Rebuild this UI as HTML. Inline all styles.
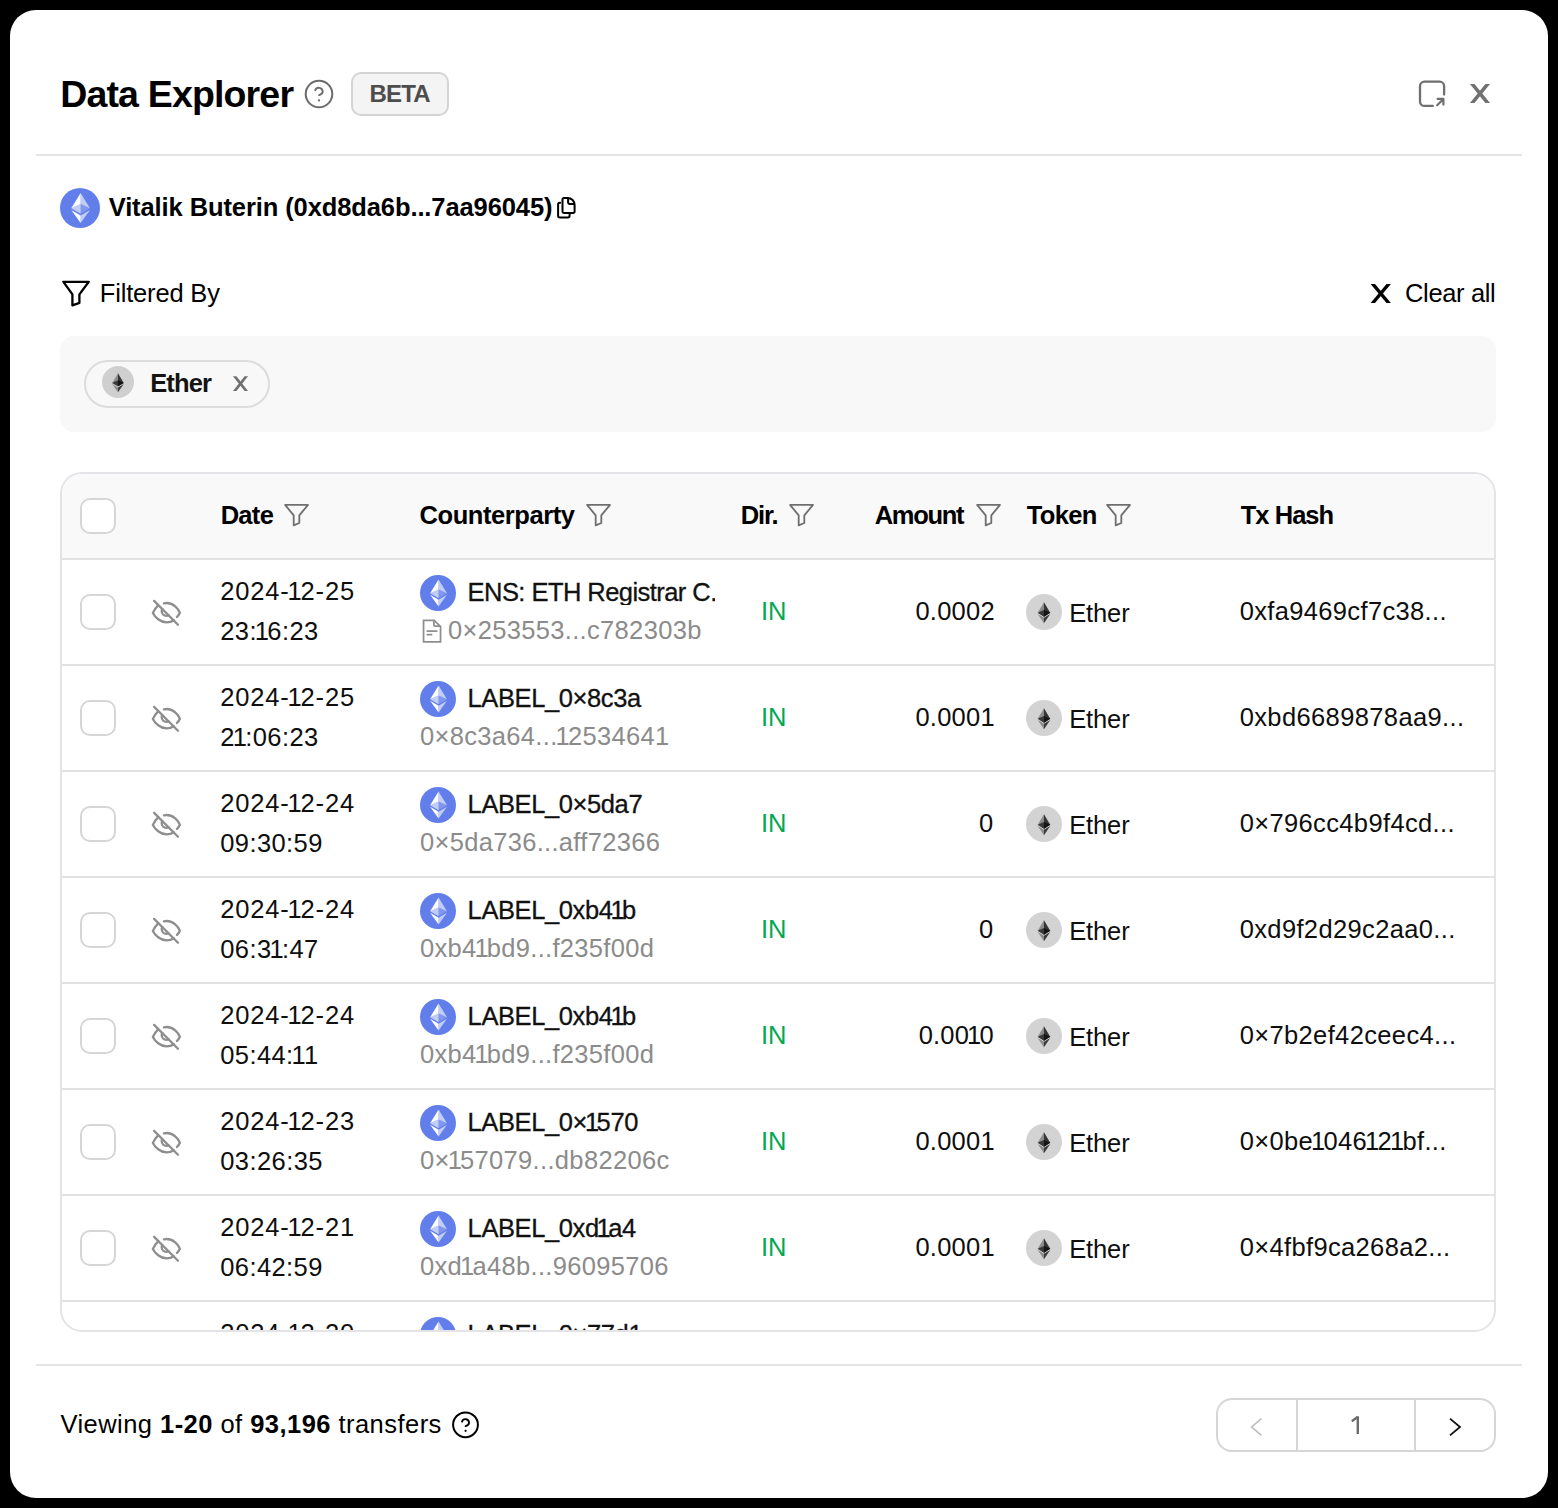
<!DOCTYPE html>
<html><head><meta charset="utf-8">
<style>
html,body{margin:0;padding:0;background:#000;width:1558px;height:1508px;overflow:hidden}
body{position:relative;font-family:"Liberation Sans",sans-serif}
.modal{position:absolute;left:10px;top:10px;width:1538px;height:1488px;background:#fff;border-radius:26px;overflow:hidden}
.abs{position:absolute}
.t{position:absolute;white-space:nowrap;font-family:"Liberation Sans",sans-serif}
.t b{font-weight:bold}
.hr{position:absolute;height:2px;background:#e4e4e8}
.cb{position:absolute;width:32px;height:32px;border:2px solid #d6d6d6;border-radius:10px;background:#fff}
.ethc{position:absolute;width:36px;height:36px}
.tokc{position:absolute;width:36px;height:36px;border-radius:50%;background:#d3d3d3}
</style></head><body>
<div class="modal"></div>
<!-- header -->
<svg class="abs" style="left:303px;top:78px" width="32" height="32" viewBox="0 0 32 32">
  <circle cx="16" cy="16" r="13.3" fill="none" stroke="#6b6b6b" stroke-width="2"/>
  <path d="M12.2 12.2a3.9 3.9 0 0 1 7.5 1.3c0 2.5-3.6 3.6-3.6 3.6" fill="none" stroke="#6b6b6b" stroke-width="1.9" stroke-linecap="round"/>
  <circle cx="16" cy="22.4" r="1.15" fill="#6b6b6b"/>
</svg>
<div class="abs" style="left:351px;top:72px;width:94px;height:40px;border:2px solid #d4d4d4;border-radius:10px;background:#f4f4f4"></div>
<svg class="abs" style="left:1410px;top:72px" width="44" height="44" viewBox="0 0 44 44">
  <path d="M22.8 33.9H14.5a4.5 4.5 0 0 1-4.5-4.5V14.2A4.5 4.5 0 0 1 14.5 9.7H29.6a4.5 4.5 0 0 1 4.5 4.5V22.6" fill="none" stroke="#6f6f6f" stroke-width="2.3" stroke-linecap="round"/>
  <path d="M27.2 33.2L33.4 27M27.6 26.8H33.4V32.6" fill="none" stroke="#6f6f6f" stroke-width="2.2" stroke-linecap="round" stroke-linejoin="round"/>
</svg>
<svg class="abs" style="left:1467px;top:82px" width="25" height="24" viewBox="0 0 25 24"><polygon points="2.90,2.00 7.50,2.00 23.00,21.00 18.40,21.00" fill="#717171"/><polygon points="18.40,2.00 23.00,2.00 7.50,21.00 2.90,21.00" fill="#717171"/></svg>
<div class="hr" style="left:36px;top:154px;width:1486px"></div>
<!-- vitalik -->
<svg class="abs" style="left:60px;top:188px" width="40" height="40" viewBox="0 0 32 32">
  <circle cx="16" cy="16" r="16" fill="#627EEA"/>
  <g fill="#FFF"><path fill-opacity=".602" d="M16.498 4v8.87l7.497 3.35z"/><path d="M16.498 4L9 16.22l7.498-3.35z"/><path fill-opacity=".602" d="M16.498 21.968v6.027L24 17.616z"/><path d="M16.498 27.995v-6.028L9 17.616z"/><path fill-opacity=".2" d="M16.498 20.573l7.497-4.353-7.497-3.348z"/><path fill-opacity=".602" d="M9 16.22l7.498 4.353v-7.701z"/></g>
</svg>
<svg class="abs" style="left:552px;top:192px" width="30" height="30" viewBox="0 0 30 30">
  <path d="M8.9 10.8H7.7A1.6 1.6 0 0 0 6.1 12.4V23.8A1.6 1.6 0 0 0 7.7 25.4H16A1.6 1.6 0 0 0 17.6 23.8V21.2" fill="none" stroke="#000" stroke-width="2" stroke-linejoin="round"/>
  <path d="M10.5 7.4A1.4 1.4 0 0 1 11.9 6H15.6C19.6 6 22.6 9.2 22.6 13V19.5A1.4 1.4 0 0 1 21.2 20.9H11.9A1.4 1.4 0 0 1 10.5 19.5Z" fill="none" stroke="#000" stroke-width="2" stroke-linejoin="round"/>
  <path d="M16.1 6.2V10.3A1.6 1.6 0 0 0 17.7 11.9H22.4" fill="none" stroke="#000" stroke-width="2"/>
</svg>
<!-- filter row -->
<svg class="abs" style="left:56px;top:274px" width="40" height="40" viewBox="0 0 40 40">
  <path d="M7.4 7.8H32.8L23.4 20.4V28.8L16.4 31.4V20.4Z" fill="none" stroke="#000" stroke-width="2.3" stroke-linejoin="round"/>
</svg>
<svg class="abs" style="left:1368px;top:281px" width="25" height="24" viewBox="0 0 25 24"><polygon points="2.60,2.90 7.00,2.90 22.90,22.00 18.50,22.00" fill="#000"/><polygon points="18.50,2.90 22.90,2.90 7.00,22.00 2.60,22.00" fill="#000"/></svg>
<div class="abs" style="left:60px;top:336px;width:1436px;height:96px;background:#f8f8f8;border-radius:14px"></div>
<div class="abs" style="left:84px;top:360px;width:182px;height:44px;border:2px solid #dcdcdc;border-radius:24px;background:#f8f8f8"></div>
<svg class="abs" style="left:102px;top:366px" width="32" height="32" viewBox="0 0 32 32">
  <circle cx="16" cy="16" r="16" fill="#cfcfcf"/>
  <g transform="translate(10.2 7.3) scale(0.0452)">
  <polygon fill="#343434" points="127.9611 0 125.1661 9.5 125.1661 285.168 127.9611 287.958 255.9231 212.32"/>
  <polygon fill="#8C8C8C" points="127.962 0 0 212.32 127.962 287.959 127.962 154.158"/>
  <polygon fill="#3C3C3B" points="127.9611 312.1866 126.3861 314.1066 126.3861 412.3056 127.9611 416.9066 255.9991 236.5866"/>
  <polygon fill="#8C8C8C" points="127.962 416.9052 127.962 312.1852 0 236.5852"/>
  <polygon fill="#141414" points="127.9611 287.9577 255.9211 212.3207 127.9611 154.1587"/>
  <polygon fill="#393939" points="0.0009 212.3208 127.9609 287.9578 127.9609 154.1588"/>
  </g>
</svg>
<svg class="abs" style="left:231px;top:374px" width="20" height="19" viewBox="0 0 20 19"><polygon points="2.00,2.20 5.40,2.20 17.00,16.90 13.60,16.90" fill="#6f6f6f"/><polygon points="13.60,2.20 17.00,2.20 5.40,16.90 2.00,16.90" fill="#6f6f6f"/></svg>
<!-- table -->
<div class="abs" style="left:60px;top:472px;width:1432px;height:856px;border:2px solid #e4e4e8;border-radius:22px;overflow:hidden;background:#fff">
  <div class="abs" style="left:0;top:0;width:1432px;height:84px;background:#f9f9f9"></div>
  <div class="abs" style="left:0;top:84px;width:1432px;height:2px;background:#e2e2e2"></div>
  <div class="abs" style="left:0;top:190px;width:1432px;height:2px;background:#e2e2e2"></div>
<div class="abs" style="left:0;top:296px;width:1432px;height:2px;background:#e2e2e2"></div>
<div class="abs" style="left:0;top:402px;width:1432px;height:2px;background:#e2e2e2"></div>
<div class="abs" style="left:0;top:508px;width:1432px;height:2px;background:#e2e2e2"></div>
<div class="abs" style="left:0;top:614px;width:1432px;height:2px;background:#e2e2e2"></div>
<div class="abs" style="left:0;top:720px;width:1432px;height:2px;background:#e2e2e2"></div>
<div class="abs" style="left:0;top:826px;width:1432px;height:2px;background:#e2e2e2"></div>
</div>
<div class="cb" style="left:80px;top:498px"></div>
<svg class="abs" style="left:282px;top:502px" width="30" height="28" viewBox="0 0 30 28"><path d="M3.1 2.9H26L17.3 13.4V21L11.7 23.4V13.4Z" fill="none" stroke="#6f6f6f" stroke-width="1.8" stroke-linejoin="round"/></svg>
<svg class="abs" style="left:584px;top:502px" width="30" height="28" viewBox="0 0 30 28"><path d="M3.1 2.9H26L17.3 13.4V21L11.7 23.4V13.4Z" fill="none" stroke="#6f6f6f" stroke-width="1.8" stroke-linejoin="round"/></svg>
<svg class="abs" style="left:787px;top:502px" width="30" height="28" viewBox="0 0 30 28"><path d="M3.1 2.9H26L17.3 13.4V21L11.7 23.4V13.4Z" fill="none" stroke="#6f6f6f" stroke-width="1.8" stroke-linejoin="round"/></svg>
<svg class="abs" style="left:974px;top:502px" width="30" height="28" viewBox="0 0 30 28"><path d="M3.1 2.9H26L17.3 13.4V21L11.7 23.4V13.4Z" fill="none" stroke="#6f6f6f" stroke-width="1.8" stroke-linejoin="round"/></svg>
<svg class="abs" style="left:1104px;top:502px" width="30" height="28" viewBox="0 0 30 28"><path d="M3.1 2.9H26L17.3 13.4V21L11.7 23.4V13.4Z" fill="none" stroke="#6f6f6f" stroke-width="1.8" stroke-linejoin="round"/></svg>
<div class="abs" style="left:0;top:0;width:1558px;height:1330px;overflow:hidden"><div class="cb" style="left:80px;top:594px"></div>
<svg class="abs" style="left:148px;top:595px" width="36" height="36" viewBox="0 0 36 36"><g fill="none" stroke="#8e8e8e" stroke-width="2.3" stroke-linecap="round"><path d="M6.1 5.9L30 29.8"/><path d="M10.2 10.4C7.8 12.6 6 15.4 4.9 17.9C7 22.2 12.2 27.4 18.8 27.4C21.6 27.4 23.8 26.6 25.8 25.2"/><path d="M15.9 8.3C16.8 8.1 17.8 8 18.8 8C25.4 8.1 30.2 13.4 31.9 17.8C31.2 19.4 30.2 20.8 28.9 22"/><path d="M14.3 13.9C13.9 14.6 13.7 15.4 13.7 16.2C13.7 18.8 15.8 20.8 18.3 20.8C19.1 20.8 19.9 20.6 20.5 20.2"/></g></svg>
<svg class="abs" style="left:1026px;top:594px" width="36" height="36" viewBox="0 0 36 36"><circle cx="18" cy="18" r="18" fill="#d3d3d3"/><g transform="translate(11.7 8.2) scale(0.049 0.0502)"><polygon fill="#343434" points="127.9611 0 125.1661 9.5 125.1661 285.168 127.9611 287.958 255.9231 212.32"/><polygon fill="#8C8C8C" points="127.962 0 0 212.32 127.962 287.959 127.962 154.158"/><polygon fill="#3C3C3B" points="127.9611 312.1866 126.3861 314.1066 126.3861 412.3056 127.9611 416.9066 255.9991 236.5866"/><polygon fill="#8C8C8C" points="127.962 416.9052 127.962 312.1852 0 236.5852"/><polygon fill="#141414" points="127.9611 287.9577 255.9211 212.3207 127.9611 154.1587"/><polygon fill="#393939" points="0.0009 212.3208 127.9609 287.9578 127.9609 154.1588"/></g></svg>
<div class="cb" style="left:80px;top:700px"></div>
<svg class="abs" style="left:148px;top:701px" width="36" height="36" viewBox="0 0 36 36"><g fill="none" stroke="#8e8e8e" stroke-width="2.3" stroke-linecap="round"><path d="M6.1 5.9L30 29.8"/><path d="M10.2 10.4C7.8 12.6 6 15.4 4.9 17.9C7 22.2 12.2 27.4 18.8 27.4C21.6 27.4 23.8 26.6 25.8 25.2"/><path d="M15.9 8.3C16.8 8.1 17.8 8 18.8 8C25.4 8.1 30.2 13.4 31.9 17.8C31.2 19.4 30.2 20.8 28.9 22"/><path d="M14.3 13.9C13.9 14.6 13.7 15.4 13.7 16.2C13.7 18.8 15.8 20.8 18.3 20.8C19.1 20.8 19.9 20.6 20.5 20.2"/></g></svg>
<svg class="abs" style="left:1026px;top:700px" width="36" height="36" viewBox="0 0 36 36"><circle cx="18" cy="18" r="18" fill="#d3d3d3"/><g transform="translate(11.7 8.2) scale(0.049 0.0502)"><polygon fill="#343434" points="127.9611 0 125.1661 9.5 125.1661 285.168 127.9611 287.958 255.9231 212.32"/><polygon fill="#8C8C8C" points="127.962 0 0 212.32 127.962 287.959 127.962 154.158"/><polygon fill="#3C3C3B" points="127.9611 312.1866 126.3861 314.1066 126.3861 412.3056 127.9611 416.9066 255.9991 236.5866"/><polygon fill="#8C8C8C" points="127.962 416.9052 127.962 312.1852 0 236.5852"/><polygon fill="#141414" points="127.9611 287.9577 255.9211 212.3207 127.9611 154.1587"/><polygon fill="#393939" points="0.0009 212.3208 127.9609 287.9578 127.9609 154.1588"/></g></svg>
<div class="cb" style="left:80px;top:806px"></div>
<svg class="abs" style="left:148px;top:807px" width="36" height="36" viewBox="0 0 36 36"><g fill="none" stroke="#8e8e8e" stroke-width="2.3" stroke-linecap="round"><path d="M6.1 5.9L30 29.8"/><path d="M10.2 10.4C7.8 12.6 6 15.4 4.9 17.9C7 22.2 12.2 27.4 18.8 27.4C21.6 27.4 23.8 26.6 25.8 25.2"/><path d="M15.9 8.3C16.8 8.1 17.8 8 18.8 8C25.4 8.1 30.2 13.4 31.9 17.8C31.2 19.4 30.2 20.8 28.9 22"/><path d="M14.3 13.9C13.9 14.6 13.7 15.4 13.7 16.2C13.7 18.8 15.8 20.8 18.3 20.8C19.1 20.8 19.9 20.6 20.5 20.2"/></g></svg>
<svg class="abs" style="left:1026px;top:806px" width="36" height="36" viewBox="0 0 36 36"><circle cx="18" cy="18" r="18" fill="#d3d3d3"/><g transform="translate(11.7 8.2) scale(0.049 0.0502)"><polygon fill="#343434" points="127.9611 0 125.1661 9.5 125.1661 285.168 127.9611 287.958 255.9231 212.32"/><polygon fill="#8C8C8C" points="127.962 0 0 212.32 127.962 287.959 127.962 154.158"/><polygon fill="#3C3C3B" points="127.9611 312.1866 126.3861 314.1066 126.3861 412.3056 127.9611 416.9066 255.9991 236.5866"/><polygon fill="#8C8C8C" points="127.962 416.9052 127.962 312.1852 0 236.5852"/><polygon fill="#141414" points="127.9611 287.9577 255.9211 212.3207 127.9611 154.1587"/><polygon fill="#393939" points="0.0009 212.3208 127.9609 287.9578 127.9609 154.1588"/></g></svg>
<div class="cb" style="left:80px;top:912px"></div>
<svg class="abs" style="left:148px;top:913px" width="36" height="36" viewBox="0 0 36 36"><g fill="none" stroke="#8e8e8e" stroke-width="2.3" stroke-linecap="round"><path d="M6.1 5.9L30 29.8"/><path d="M10.2 10.4C7.8 12.6 6 15.4 4.9 17.9C7 22.2 12.2 27.4 18.8 27.4C21.6 27.4 23.8 26.6 25.8 25.2"/><path d="M15.9 8.3C16.8 8.1 17.8 8 18.8 8C25.4 8.1 30.2 13.4 31.9 17.8C31.2 19.4 30.2 20.8 28.9 22"/><path d="M14.3 13.9C13.9 14.6 13.7 15.4 13.7 16.2C13.7 18.8 15.8 20.8 18.3 20.8C19.1 20.8 19.9 20.6 20.5 20.2"/></g></svg>
<svg class="abs" style="left:1026px;top:912px" width="36" height="36" viewBox="0 0 36 36"><circle cx="18" cy="18" r="18" fill="#d3d3d3"/><g transform="translate(11.7 8.2) scale(0.049 0.0502)"><polygon fill="#343434" points="127.9611 0 125.1661 9.5 125.1661 285.168 127.9611 287.958 255.9231 212.32"/><polygon fill="#8C8C8C" points="127.962 0 0 212.32 127.962 287.959 127.962 154.158"/><polygon fill="#3C3C3B" points="127.9611 312.1866 126.3861 314.1066 126.3861 412.3056 127.9611 416.9066 255.9991 236.5866"/><polygon fill="#8C8C8C" points="127.962 416.9052 127.962 312.1852 0 236.5852"/><polygon fill="#141414" points="127.9611 287.9577 255.9211 212.3207 127.9611 154.1587"/><polygon fill="#393939" points="0.0009 212.3208 127.9609 287.9578 127.9609 154.1588"/></g></svg>
<div class="cb" style="left:80px;top:1018px"></div>
<svg class="abs" style="left:148px;top:1019px" width="36" height="36" viewBox="0 0 36 36"><g fill="none" stroke="#8e8e8e" stroke-width="2.3" stroke-linecap="round"><path d="M6.1 5.9L30 29.8"/><path d="M10.2 10.4C7.8 12.6 6 15.4 4.9 17.9C7 22.2 12.2 27.4 18.8 27.4C21.6 27.4 23.8 26.6 25.8 25.2"/><path d="M15.9 8.3C16.8 8.1 17.8 8 18.8 8C25.4 8.1 30.2 13.4 31.9 17.8C31.2 19.4 30.2 20.8 28.9 22"/><path d="M14.3 13.9C13.9 14.6 13.7 15.4 13.7 16.2C13.7 18.8 15.8 20.8 18.3 20.8C19.1 20.8 19.9 20.6 20.5 20.2"/></g></svg>
<svg class="abs" style="left:1026px;top:1018px" width="36" height="36" viewBox="0 0 36 36"><circle cx="18" cy="18" r="18" fill="#d3d3d3"/><g transform="translate(11.7 8.2) scale(0.049 0.0502)"><polygon fill="#343434" points="127.9611 0 125.1661 9.5 125.1661 285.168 127.9611 287.958 255.9231 212.32"/><polygon fill="#8C8C8C" points="127.962 0 0 212.32 127.962 287.959 127.962 154.158"/><polygon fill="#3C3C3B" points="127.9611 312.1866 126.3861 314.1066 126.3861 412.3056 127.9611 416.9066 255.9991 236.5866"/><polygon fill="#8C8C8C" points="127.962 416.9052 127.962 312.1852 0 236.5852"/><polygon fill="#141414" points="127.9611 287.9577 255.9211 212.3207 127.9611 154.1587"/><polygon fill="#393939" points="0.0009 212.3208 127.9609 287.9578 127.9609 154.1588"/></g></svg>
<div class="cb" style="left:80px;top:1124px"></div>
<svg class="abs" style="left:148px;top:1125px" width="36" height="36" viewBox="0 0 36 36"><g fill="none" stroke="#8e8e8e" stroke-width="2.3" stroke-linecap="round"><path d="M6.1 5.9L30 29.8"/><path d="M10.2 10.4C7.8 12.6 6 15.4 4.9 17.9C7 22.2 12.2 27.4 18.8 27.4C21.6 27.4 23.8 26.6 25.8 25.2"/><path d="M15.9 8.3C16.8 8.1 17.8 8 18.8 8C25.4 8.1 30.2 13.4 31.9 17.8C31.2 19.4 30.2 20.8 28.9 22"/><path d="M14.3 13.9C13.9 14.6 13.7 15.4 13.7 16.2C13.7 18.8 15.8 20.8 18.3 20.8C19.1 20.8 19.9 20.6 20.5 20.2"/></g></svg>
<svg class="abs" style="left:1026px;top:1124px" width="36" height="36" viewBox="0 0 36 36"><circle cx="18" cy="18" r="18" fill="#d3d3d3"/><g transform="translate(11.7 8.2) scale(0.049 0.0502)"><polygon fill="#343434" points="127.9611 0 125.1661 9.5 125.1661 285.168 127.9611 287.958 255.9231 212.32"/><polygon fill="#8C8C8C" points="127.962 0 0 212.32 127.962 287.959 127.962 154.158"/><polygon fill="#3C3C3B" points="127.9611 312.1866 126.3861 314.1066 126.3861 412.3056 127.9611 416.9066 255.9991 236.5866"/><polygon fill="#8C8C8C" points="127.962 416.9052 127.962 312.1852 0 236.5852"/><polygon fill="#141414" points="127.9611 287.9577 255.9211 212.3207 127.9611 154.1587"/><polygon fill="#393939" points="0.0009 212.3208 127.9609 287.9578 127.9609 154.1588"/></g></svg>
<div class="cb" style="left:80px;top:1230px"></div>
<svg class="abs" style="left:148px;top:1231px" width="36" height="36" viewBox="0 0 36 36"><g fill="none" stroke="#8e8e8e" stroke-width="2.3" stroke-linecap="round"><path d="M6.1 5.9L30 29.8"/><path d="M10.2 10.4C7.8 12.6 6 15.4 4.9 17.9C7 22.2 12.2 27.4 18.8 27.4C21.6 27.4 23.8 26.6 25.8 25.2"/><path d="M15.9 8.3C16.8 8.1 17.8 8 18.8 8C25.4 8.1 30.2 13.4 31.9 17.8C31.2 19.4 30.2 20.8 28.9 22"/><path d="M14.3 13.9C13.9 14.6 13.7 15.4 13.7 16.2C13.7 18.8 15.8 20.8 18.3 20.8C19.1 20.8 19.9 20.6 20.5 20.2"/></g></svg>
<svg class="abs" style="left:1026px;top:1230px" width="36" height="36" viewBox="0 0 36 36"><circle cx="18" cy="18" r="18" fill="#d3d3d3"/><g transform="translate(11.7 8.2) scale(0.049 0.0502)"><polygon fill="#343434" points="127.9611 0 125.1661 9.5 125.1661 285.168 127.9611 287.958 255.9231 212.32"/><polygon fill="#8C8C8C" points="127.962 0 0 212.32 127.962 287.959 127.962 154.158"/><polygon fill="#3C3C3B" points="127.9611 312.1866 126.3861 314.1066 126.3861 412.3056 127.9611 416.9066 255.9991 236.5866"/><polygon fill="#8C8C8C" points="127.962 416.9052 127.962 312.1852 0 236.5852"/><polygon fill="#141414" points="127.9611 287.9577 255.9211 212.3207 127.9611 154.1587"/><polygon fill="#393939" points="0.0009 212.3208 127.9609 287.9578 127.9609 154.1588"/></g></svg>
<div class="cb" style="left:80px;top:1336px"></div>
<svg class="abs" style="left:148px;top:1337px" width="36" height="36" viewBox="0 0 36 36"><g fill="none" stroke="#8e8e8e" stroke-width="2.3" stroke-linecap="round"><path d="M6.1 5.9L30 29.8"/><path d="M10.2 10.4C7.8 12.6 6 15.4 4.9 17.9C7 22.2 12.2 27.4 18.8 27.4C21.6 27.4 23.8 26.6 25.8 25.2"/><path d="M15.9 8.3C16.8 8.1 17.8 8 18.8 8C25.4 8.1 30.2 13.4 31.9 17.8C31.2 19.4 30.2 20.8 28.9 22"/><path d="M14.3 13.9C13.9 14.6 13.7 15.4 13.7 16.2C13.7 18.8 15.8 20.8 18.3 20.8C19.1 20.8 19.9 20.6 20.5 20.2"/></g></svg>
<svg class="abs" style="left:1026px;top:1336px" width="36" height="36" viewBox="0 0 36 36"><circle cx="18" cy="18" r="18" fill="#d3d3d3"/><g transform="translate(11.7 8.2) scale(0.049 0.0502)"><polygon fill="#343434" points="127.9611 0 125.1661 9.5 125.1661 285.168 127.9611 287.958 255.9231 212.32"/><polygon fill="#8C8C8C" points="127.962 0 0 212.32 127.962 287.959 127.962 154.158"/><polygon fill="#3C3C3B" points="127.9611 312.1866 126.3861 314.1066 126.3861 412.3056 127.9611 416.9066 255.9991 236.5866"/><polygon fill="#8C8C8C" points="127.962 416.9052 127.962 312.1852 0 236.5852"/><polygon fill="#141414" points="127.9611 287.9577 255.9211 212.3207 127.9611 154.1587"/><polygon fill="#393939" points="0.0009 212.3208 127.9609 287.9578 127.9609 154.1588"/></g></svg>
<svg class="abs" style="left:420px;top:575px" width="36" height="36" viewBox="0 0 32 32"><circle cx="16" cy="16" r="16" fill="#627EEA"/><g fill="#FFF"><path fill-opacity=".602" d="M16.498 4v8.87l7.497 3.35z"/><path d="M16.498 4L9 16.22l7.498-3.35z"/><path fill-opacity=".602" d="M16.498 21.968v6.027L24 17.616z"/><path d="M16.498 27.995v-6.028L9 17.616z"/><path fill-opacity=".2" d="M16.498 20.573l7.497-4.353-7.497-3.348z"/><path fill-opacity=".602" d="M9 16.22l7.498 4.353v-7.701z"/></g></svg>
<svg class="abs" style="left:418px;top:615px" width="28" height="32" viewBox="0 0 28 32"><g fill="none" stroke="#8e8e8e" stroke-width="1.75"><path d="M5.55 5.25H16.1L22.55 11.6V26.75H5.55Z"/><path d="M15.9 5.25V10A1.2 1.2 0 0 0 17.1 11.2H22.55"/><path d="M9.2 16.1H18.8M9.2 19.6H13.6" stroke-linecap="round"/></g></svg>
<svg class="abs" style="left:420px;top:681px" width="36" height="36" viewBox="0 0 32 32"><circle cx="16" cy="16" r="16" fill="#627EEA"/><g fill="#FFF"><path fill-opacity=".602" d="M16.498 4v8.87l7.497 3.35z"/><path d="M16.498 4L9 16.22l7.498-3.35z"/><path fill-opacity=".602" d="M16.498 21.968v6.027L24 17.616z"/><path d="M16.498 27.995v-6.028L9 17.616z"/><path fill-opacity=".2" d="M16.498 20.573l7.497-4.353-7.497-3.348z"/><path fill-opacity=".602" d="M9 16.22l7.498 4.353v-7.701z"/></g></svg>
<svg class="abs" style="left:420px;top:787px" width="36" height="36" viewBox="0 0 32 32"><circle cx="16" cy="16" r="16" fill="#627EEA"/><g fill="#FFF"><path fill-opacity=".602" d="M16.498 4v8.87l7.497 3.35z"/><path d="M16.498 4L9 16.22l7.498-3.35z"/><path fill-opacity=".602" d="M16.498 21.968v6.027L24 17.616z"/><path d="M16.498 27.995v-6.028L9 17.616z"/><path fill-opacity=".2" d="M16.498 20.573l7.497-4.353-7.497-3.348z"/><path fill-opacity=".602" d="M9 16.22l7.498 4.353v-7.701z"/></g></svg>
<svg class="abs" style="left:420px;top:893px" width="36" height="36" viewBox="0 0 32 32"><circle cx="16" cy="16" r="16" fill="#627EEA"/><g fill="#FFF"><path fill-opacity=".602" d="M16.498 4v8.87l7.497 3.35z"/><path d="M16.498 4L9 16.22l7.498-3.35z"/><path fill-opacity=".602" d="M16.498 21.968v6.027L24 17.616z"/><path d="M16.498 27.995v-6.028L9 17.616z"/><path fill-opacity=".2" d="M16.498 20.573l7.497-4.353-7.497-3.348z"/><path fill-opacity=".602" d="M9 16.22l7.498 4.353v-7.701z"/></g></svg>
<svg class="abs" style="left:420px;top:999px" width="36" height="36" viewBox="0 0 32 32"><circle cx="16" cy="16" r="16" fill="#627EEA"/><g fill="#FFF"><path fill-opacity=".602" d="M16.498 4v8.87l7.497 3.35z"/><path d="M16.498 4L9 16.22l7.498-3.35z"/><path fill-opacity=".602" d="M16.498 21.968v6.027L24 17.616z"/><path d="M16.498 27.995v-6.028L9 17.616z"/><path fill-opacity=".2" d="M16.498 20.573l7.497-4.353-7.497-3.348z"/><path fill-opacity=".602" d="M9 16.22l7.498 4.353v-7.701z"/></g></svg>
<svg class="abs" style="left:420px;top:1105px" width="36" height="36" viewBox="0 0 32 32"><circle cx="16" cy="16" r="16" fill="#627EEA"/><g fill="#FFF"><path fill-opacity=".602" d="M16.498 4v8.87l7.497 3.35z"/><path d="M16.498 4L9 16.22l7.498-3.35z"/><path fill-opacity=".602" d="M16.498 21.968v6.027L24 17.616z"/><path d="M16.498 27.995v-6.028L9 17.616z"/><path fill-opacity=".2" d="M16.498 20.573l7.497-4.353-7.497-3.348z"/><path fill-opacity=".602" d="M9 16.22l7.498 4.353v-7.701z"/></g></svg>
<svg class="abs" style="left:420px;top:1211px" width="36" height="36" viewBox="0 0 32 32"><circle cx="16" cy="16" r="16" fill="#627EEA"/><g fill="#FFF"><path fill-opacity=".602" d="M16.498 4v8.87l7.497 3.35z"/><path d="M16.498 4L9 16.22l7.498-3.35z"/><path fill-opacity=".602" d="M16.498 21.968v6.027L24 17.616z"/><path d="M16.498 27.995v-6.028L9 17.616z"/><path fill-opacity=".2" d="M16.498 20.573l7.497-4.353-7.497-3.348z"/><path fill-opacity=".602" d="M9 16.22l7.498 4.353v-7.701z"/></g></svg>
<svg class="abs" style="left:420px;top:1317px" width="36" height="36" viewBox="0 0 32 32"><circle cx="16" cy="16" r="16" fill="#627EEA"/><g fill="#FFF"><path fill-opacity=".602" d="M16.498 4v8.87l7.497 3.35z"/><path d="M16.498 4L9 16.22l7.498-3.35z"/><path fill-opacity=".602" d="M16.498 21.968v6.027L24 17.616z"/><path d="M16.498 27.995v-6.028L9 17.616z"/><path fill-opacity=".2" d="M16.498 20.573l7.497-4.353-7.497-3.348z"/><path fill-opacity=".602" d="M9 16.22l7.498 4.353v-7.701z"/></g></svg>
<div class="t" style="left:220.20px;top:579.40px;font-size:25.5px;line-height:25.5px;letter-spacing:0.856px;color:#0e0e0e;font-weight:normal">2024<span style="letter-spacing:-1.244px">-</span><span style="letter-spacing:-1.244px">1</span>2-25</div>
<div class="t" style="left:220.20px;top:619.20px;font-size:25.5px;line-height:25.5px;letter-spacing:0.426px;color:#0e0e0e;font-weight:normal">23<span style="letter-spacing:-1.674px">:</span><span style="letter-spacing:-1.674px">1</span>6:23</div>
<div class="t" style="left:467.60px;top:579.90px;font-size:25.5px;line-height:25.5px;letter-spacing:-0.553px;color:#111;font-weight:normal;width:247.40px;overflow:hidden;-webkit-text-stroke:0.3px #111">ENS: ETH Registrar C...</div>
<div class="t" style="left:448.00px;top:617.50px;font-size:25.5px;line-height:25.5px;letter-spacing:0.328px;color:#8b8b8b;font-weight:normal">0×253553...c782303b</div>
<div class="t" style="left:761.10px;top:599.30px;font-size:25.5px;line-height:25.5px;letter-spacing:-0.285px;color:#03a852;font-weight:normal">IN</div>
<div class="t" style="left:915.44px;top:599.30px;font-size:25.5px;line-height:25.5px;letter-spacing:0.229px;color:#0e0e0e;font-weight:normal">0.0002</div>
<div class="t" style="left:1069.20px;top:600.80px;font-size:25.5px;line-height:25.5px;letter-spacing:-0.114px;color:#0e0e0e;font-weight:normal">Ether</div>
<div class="t" style="left:1239.70px;top:598.80px;font-size:25.5px;line-height:25.5px;letter-spacing:0.345px;color:#0e0e0e;font-weight:normal">0xfa9469cf7c38...</div>
<div class="t" style="left:220.20px;top:685.40px;font-size:25.5px;line-height:25.5px;letter-spacing:0.856px;color:#0e0e0e;font-weight:normal">2024<span style="letter-spacing:-1.244px">-</span><span style="letter-spacing:-1.244px">1</span>2-25</div>
<div class="t" style="left:220.20px;top:725.20px;font-size:25.5px;line-height:25.5px;letter-spacing:0.426px;color:#0e0e0e;font-weight:normal"><span style="letter-spacing:-1.674px">2</span><span style="letter-spacing:-1.674px">1</span>:06:23</div>
<div class="t" style="left:467.60px;top:685.90px;font-size:25.5px;line-height:25.5px;letter-spacing:-0.402px;color:#111;font-weight:normal;-webkit-text-stroke:0.3px #111">LABEL_0×8c3a</div>
<div class="t" style="left:420.00px;top:723.50px;font-size:25.5px;line-height:25.5px;letter-spacing:0.327px;color:#8b8b8b;font-weight:normal">0×8c3a64..<span style="letter-spacing:-1.773px">.</span><span style="letter-spacing:-1.773px">1</span>2534641</div>
<div class="t" style="left:761.10px;top:705.30px;font-size:25.5px;line-height:25.5px;letter-spacing:-0.285px;color:#03a852;font-weight:normal">IN</div>
<div class="t" style="left:915.44px;top:705.30px;font-size:25.5px;line-height:25.5px;letter-spacing:0.229px;color:#0e0e0e;font-weight:normal">0.0001</div>
<div class="t" style="left:1069.20px;top:706.80px;font-size:25.5px;line-height:25.5px;letter-spacing:-0.114px;color:#0e0e0e;font-weight:normal">Ether</div>
<div class="t" style="left:1239.70px;top:704.80px;font-size:25.5px;line-height:25.5px;letter-spacing:0.375px;color:#0e0e0e;font-weight:normal">0xbd6689878aa9...</div>
<div class="t" style="left:220.20px;top:791.40px;font-size:25.5px;line-height:25.5px;letter-spacing:0.856px;color:#0e0e0e;font-weight:normal">2024<span style="letter-spacing:-1.244px">-</span><span style="letter-spacing:-1.244px">1</span>2-24</div>
<div class="t" style="left:220.20px;top:831.20px;font-size:25.5px;line-height:25.5px;letter-spacing:0.422px;color:#0e0e0e;font-weight:normal">09:30:59</div>
<div class="t" style="left:467.60px;top:791.90px;font-size:25.5px;line-height:25.5px;letter-spacing:-0.400px;color:#111;font-weight:normal;-webkit-text-stroke:0.3px #111">LABEL_0×5da7</div>
<div class="t" style="left:420.00px;top:829.50px;font-size:25.5px;line-height:25.5px;letter-spacing:0.311px;color:#8b8b8b;font-weight:normal">0×5da736...aff72366</div>
<div class="t" style="left:761.10px;top:811.30px;font-size:25.5px;line-height:25.5px;letter-spacing:-0.285px;color:#03a852;font-weight:normal">IN</div>
<div class="t" style="left:978.88px;top:811.30px;font-size:25.5px;line-height:25.5px;letter-spacing:0.000px;color:#0e0e0e;font-weight:normal">0</div>
<div class="t" style="left:1069.20px;top:812.80px;font-size:25.5px;line-height:25.5px;letter-spacing:-0.114px;color:#0e0e0e;font-weight:normal">Ether</div>
<div class="t" style="left:1239.70px;top:810.80px;font-size:25.5px;line-height:25.5px;letter-spacing:0.359px;color:#0e0e0e;font-weight:normal">0×796cc4b9f4cd...</div>
<div class="t" style="left:220.20px;top:897.40px;font-size:25.5px;line-height:25.5px;letter-spacing:0.856px;color:#0e0e0e;font-weight:normal">2024<span style="letter-spacing:-1.244px">-</span><span style="letter-spacing:-1.244px">1</span>2-24</div>
<div class="t" style="left:220.20px;top:937.20px;font-size:25.5px;line-height:25.5px;letter-spacing:0.422px;color:#0e0e0e;font-weight:normal">06:<span style="letter-spacing:-1.678px">3</span><span style="letter-spacing:-1.678px">1</span>:47</div>
<div class="t" style="left:467.60px;top:897.90px;font-size:25.5px;line-height:25.5px;letter-spacing:-0.398px;color:#111;font-weight:normal;-webkit-text-stroke:0.3px #111">LABEL_0xb<span style="letter-spacing:-2.498px">4</span><span style="letter-spacing:-2.498px">1</span>b</div>
<div class="t" style="left:420.00px;top:935.50px;font-size:25.5px;line-height:25.5px;letter-spacing:0.307px;color:#8b8b8b;font-weight:normal">0xb<span style="letter-spacing:-1.793px">4</span><span style="letter-spacing:-1.793px">1</span>bd9...f235f00d</div>
<div class="t" style="left:761.10px;top:917.30px;font-size:25.5px;line-height:25.5px;letter-spacing:-0.285px;color:#03a852;font-weight:normal">IN</div>
<div class="t" style="left:978.88px;top:917.30px;font-size:25.5px;line-height:25.5px;letter-spacing:0.000px;color:#0e0e0e;font-weight:normal">0</div>
<div class="t" style="left:1069.20px;top:918.80px;font-size:25.5px;line-height:25.5px;letter-spacing:-0.114px;color:#0e0e0e;font-weight:normal">Ether</div>
<div class="t" style="left:1239.70px;top:916.80px;font-size:25.5px;line-height:25.5px;letter-spacing:0.360px;color:#0e0e0e;font-weight:normal">0xd9f2d29c2aa0...</div>
<div class="t" style="left:220.20px;top:1003.40px;font-size:25.5px;line-height:25.5px;letter-spacing:0.856px;color:#0e0e0e;font-weight:normal">2024<span style="letter-spacing:-1.244px">-</span><span style="letter-spacing:-1.244px">1</span>2-24</div>
<div class="t" style="left:220.20px;top:1043.20px;font-size:25.5px;line-height:25.5px;letter-spacing:0.414px;color:#0e0e0e;font-weight:normal">05:44<span style="letter-spacing:-1.686px">:</span><span style="letter-spacing:-1.686px">1</span>1</div>
<div class="t" style="left:467.60px;top:1003.90px;font-size:25.5px;line-height:25.5px;letter-spacing:-0.398px;color:#111;font-weight:normal;-webkit-text-stroke:0.3px #111">LABEL_0xb<span style="letter-spacing:-2.498px">4</span><span style="letter-spacing:-2.498px">1</span>b</div>
<div class="t" style="left:420.00px;top:1041.50px;font-size:25.5px;line-height:25.5px;letter-spacing:0.307px;color:#8b8b8b;font-weight:normal">0xb<span style="letter-spacing:-1.793px">4</span><span style="letter-spacing:-1.793px">1</span>bd9...f235f00d</div>
<div class="t" style="left:761.10px;top:1023.30px;font-size:25.5px;line-height:25.5px;letter-spacing:-0.285px;color:#03a852;font-weight:normal">IN</div>
<div class="t" style="left:918.63px;top:1023.30px;font-size:25.5px;line-height:25.5px;letter-spacing:0.232px;color:#0e0e0e;font-weight:normal">0.0<span style="letter-spacing:-1.868px">0</span><span style="letter-spacing:-1.868px">1</span>0</div>
<div class="t" style="left:1069.20px;top:1024.80px;font-size:25.5px;line-height:25.5px;letter-spacing:-0.114px;color:#0e0e0e;font-weight:normal">Ether</div>
<div class="t" style="left:1239.70px;top:1022.80px;font-size:25.5px;line-height:25.5px;letter-spacing:0.361px;color:#0e0e0e;font-weight:normal">0×7b2ef42ceec4...</div>
<div class="t" style="left:220.20px;top:1109.40px;font-size:25.5px;line-height:25.5px;letter-spacing:0.856px;color:#0e0e0e;font-weight:normal">2024<span style="letter-spacing:-1.244px">-</span><span style="letter-spacing:-1.244px">1</span>2-23</div>
<div class="t" style="left:220.20px;top:1149.20px;font-size:25.5px;line-height:25.5px;letter-spacing:0.426px;color:#0e0e0e;font-weight:normal">03:26:35</div>
<div class="t" style="left:467.60px;top:1109.90px;font-size:25.5px;line-height:25.5px;letter-spacing:-0.403px;color:#111;font-weight:normal;-webkit-text-stroke:0.3px #111">LABEL_0<span style="letter-spacing:-2.503px">×</span><span style="letter-spacing:-2.503px">1</span>570</div>
<div class="t" style="left:420.00px;top:1147.50px;font-size:25.5px;line-height:25.5px;letter-spacing:0.329px;color:#8b8b8b;font-weight:normal">0<span style="letter-spacing:-1.771px">×</span><span style="letter-spacing:-1.771px">1</span>57079...db82206c</div>
<div class="t" style="left:761.10px;top:1129.30px;font-size:25.5px;line-height:25.5px;letter-spacing:-0.285px;color:#03a852;font-weight:normal">IN</div>
<div class="t" style="left:915.44px;top:1129.30px;font-size:25.5px;line-height:25.5px;letter-spacing:0.229px;color:#0e0e0e;font-weight:normal">0.0001</div>
<div class="t" style="left:1069.20px;top:1130.80px;font-size:25.5px;line-height:25.5px;letter-spacing:-0.114px;color:#0e0e0e;font-weight:normal">Ether</div>
<div class="t" style="left:1239.70px;top:1128.80px;font-size:25.5px;line-height:25.5px;letter-spacing:0.366px;color:#0e0e0e;font-weight:normal">0×0b<span style="letter-spacing:-1.734px">e</span><span style="letter-spacing:-1.734px">1</span>04<span style="letter-spacing:-1.734px">6</span><span style="letter-spacing:-1.734px">1</span><span style="letter-spacing:-1.734px">2</span><span style="letter-spacing:-1.734px">1</span>bf...</div>
<div class="t" style="left:220.20px;top:1215.40px;font-size:25.5px;line-height:25.5px;letter-spacing:0.850px;color:#0e0e0e;font-weight:normal">2024<span style="letter-spacing:-1.250px">-</span><span style="letter-spacing:-1.250px">1</span>2-21</div>
<div class="t" style="left:220.20px;top:1255.20px;font-size:25.5px;line-height:25.5px;letter-spacing:0.422px;color:#0e0e0e;font-weight:normal">06:42:59</div>
<div class="t" style="left:467.60px;top:1215.90px;font-size:25.5px;line-height:25.5px;letter-spacing:-0.398px;color:#111;font-weight:normal;-webkit-text-stroke:0.3px #111">LABEL_0x<span style="letter-spacing:-2.498px">d</span><span style="letter-spacing:-2.498px">1</span>a4</div>
<div class="t" style="left:420.00px;top:1253.50px;font-size:25.5px;line-height:25.5px;letter-spacing:0.327px;color:#8b8b8b;font-weight:normal">0x<span style="letter-spacing:-1.773px">d</span><span style="letter-spacing:-1.773px">1</span>a48b...96095706</div>
<div class="t" style="left:761.10px;top:1235.30px;font-size:25.5px;line-height:25.5px;letter-spacing:-0.285px;color:#03a852;font-weight:normal">IN</div>
<div class="t" style="left:915.44px;top:1235.30px;font-size:25.5px;line-height:25.5px;letter-spacing:0.229px;color:#0e0e0e;font-weight:normal">0.0001</div>
<div class="t" style="left:1069.20px;top:1236.80px;font-size:25.5px;line-height:25.5px;letter-spacing:-0.114px;color:#0e0e0e;font-weight:normal">Ether</div>
<div class="t" style="left:1239.70px;top:1234.80px;font-size:25.5px;line-height:25.5px;letter-spacing:0.352px;color:#0e0e0e;font-weight:normal">0×4fbf9ca268a2...</div>
<div class="t" style="left:220.20px;top:1321.40px;font-size:25.5px;line-height:25.5px;letter-spacing:0.856px;color:#0e0e0e;font-weight:normal">2024<span style="letter-spacing:-1.244px">-</span><span style="letter-spacing:-1.244px">1</span>2-20</div>
<div class="t" style="left:220.20px;top:1361.20px;font-size:25.5px;line-height:25.5px;letter-spacing:0.426px;color:#0e0e0e;font-weight:normal">05<span style="letter-spacing:-1.674px">:</span><span style="letter-spacing:-1.674px">1</span>2:44</div>
<div class="t" style="left:467.60px;top:1321.90px;font-size:25.5px;line-height:25.5px;letter-spacing:-0.400px;color:#111;font-weight:normal;-webkit-text-stroke:0.3px #111">LABEL_0×77d1</div>
<div class="t" style="left:420.00px;top:1359.50px;font-size:25.5px;line-height:25.5px;letter-spacing:0.327px;color:#8b8b8b;font-weight:normal">0×77<span style="letter-spacing:-1.773px">d</span><span style="letter-spacing:-1.773px">1</span>a2...8<span style="letter-spacing:-1.773px">a</span><span style="letter-spacing:-1.773px">1</span>b2c3d</div>
<div class="t" style="left:761.10px;top:1341.30px;font-size:25.5px;line-height:25.5px;letter-spacing:-0.285px;color:#03a852;font-weight:normal">IN</div>
<div class="t" style="left:915.44px;top:1341.30px;font-size:25.5px;line-height:25.5px;letter-spacing:0.229px;color:#0e0e0e;font-weight:normal">0.0001</div>
<div class="t" style="left:1069.20px;top:1342.80px;font-size:25.5px;line-height:25.5px;letter-spacing:-0.114px;color:#0e0e0e;font-weight:normal">Ether</div>
<div class="t" style="left:1239.70px;top:1340.80px;font-size:25.5px;line-height:25.5px;letter-spacing:0.364px;color:#0e0e0e;font-weight:normal">0<span style="letter-spacing:-1.736px">×</span><span style="letter-spacing:-1.736px">1</span>a2b3c4d5e6f...</div></div>
<div class="hr" style="left:36px;top:1364px;width:1486px"></div>
<svg class="abs" style="left:449px;top:1408px" width="34" height="34" viewBox="0 0 34 34">
  <circle cx="16.5" cy="16.8" r="12.4" fill="none" stroke="#000" stroke-width="2"/>
  <path d="M13 13.6a3.6 3.6 0 0 1 7 1.2c0 2.3-3.4 3.4-3.4 3.4" fill="none" stroke="#000" stroke-width="1.9" stroke-linecap="round"/>
  <circle cx="16.6" cy="22.8" r="1.15" fill="#000"/>
</svg>
<div class="abs" style="left:1216px;top:1398px;width:276px;height:50px;border:2px solid #d6d6d6;border-radius:16px"></div>
<div class="abs" style="left:1296px;top:1400px;width:2px;height:50px;background:#d6d6d6"></div>
<div class="abs" style="left:1414px;top:1400px;width:2px;height:50px;background:#d6d6d6"></div>
<svg class="abs" style="left:1244px;top:1412px" width="24" height="30" viewBox="0 0 24 30">
  <path d="M17.5 6.6L7.6 15L17.5 23.4" fill="none" stroke="#bdbdbd" stroke-width="1.6"/>
</svg>
<svg class="abs" style="left:1444px;top:1412px" width="24" height="30" viewBox="0 0 24 30">
  <path d="M6 6.6L16 15L6 23.4" fill="none" stroke="#111" stroke-width="1.8"/>
</svg>
<svg class="abs" style="left:1347px;top:1412px" width="16" height="26" viewBox="0 0 16 26"><path d="M10.8 4.3V22" stroke="#6b6b6b" stroke-width="2.4" fill="none"/><path d="M4.8 9.2L10.6 5" stroke="#6b6b6b" stroke-width="2.3" fill="none"/></svg>
<div class="t" style="left:60.20px;top:75.90px;font-size:37.5px;line-height:37.5px;letter-spacing:-0.837px;color:#000;font-weight:bold">Data Explorer</div>
<div class="t" style="left:369.50px;top:81.80px;font-size:24px;line-height:24px;letter-spacing:-0.840px;color:#4d4d4d;font-weight:bold">BETA</div>
<div class="t" style="left:108.70px;top:194.70px;font-size:25.5px;line-height:25.5px;letter-spacing:-0.100px;color:#000;font-weight:bold">Vitalik Buterin (0xd8da6b...7aa96045)</div>
<div class="t" style="left:99.80px;top:280.80px;font-size:25.5px;line-height:25.5px;letter-spacing:-0.172px;color:#000;font-weight:normal">Filtered By</div>
<div class="t" style="left:1405.00px;top:280.80px;font-size:25.5px;line-height:25.5px;letter-spacing:-0.346px;color:#000;font-weight:normal">Clear all</div>
<div class="t" style="left:150.20px;top:371.00px;font-size:25.5px;line-height:25.5px;letter-spacing:-0.865px;color:#141414;font-weight:bold">Ether</div>
<div class="t" style="left:220.65px;top:502.80px;font-size:25.5px;line-height:25.5px;letter-spacing:-0.696px;color:#000;font-weight:bold">Date</div>
<div class="t" style="left:419.50px;top:502.80px;font-size:25.5px;line-height:25.5px;letter-spacing:-0.420px;color:#000;font-weight:bold">Counterparty</div>
<div class="t" style="left:740.80px;top:502.80px;font-size:25.5px;line-height:25.5px;letter-spacing:-1.139px;color:#000;font-weight:bold">Dir.</div>
<div class="t" style="left:874.70px;top:502.80px;font-size:25.5px;line-height:25.5px;letter-spacing:-1.304px;color:#000;font-weight:bold">Amount</div>
<div class="t" style="left:1026.80px;top:502.80px;font-size:25.5px;line-height:25.5px;letter-spacing:-0.656px;color:#000;font-weight:bold">Token</div>
<div class="t" style="left:1240.70px;top:502.80px;font-size:25.5px;line-height:25.5px;letter-spacing:-0.954px;color:#000;font-weight:bold">Tx Hash</div>
<div class="t" style="left:60.40px;top:1411.90px;font-size:25.5px;line-height:25.5px;letter-spacing:0.460px;color:#000;font-weight:normal">Viewing <b>1-20</b> of <b>93,196</b> transfers</div>
</body></html>
